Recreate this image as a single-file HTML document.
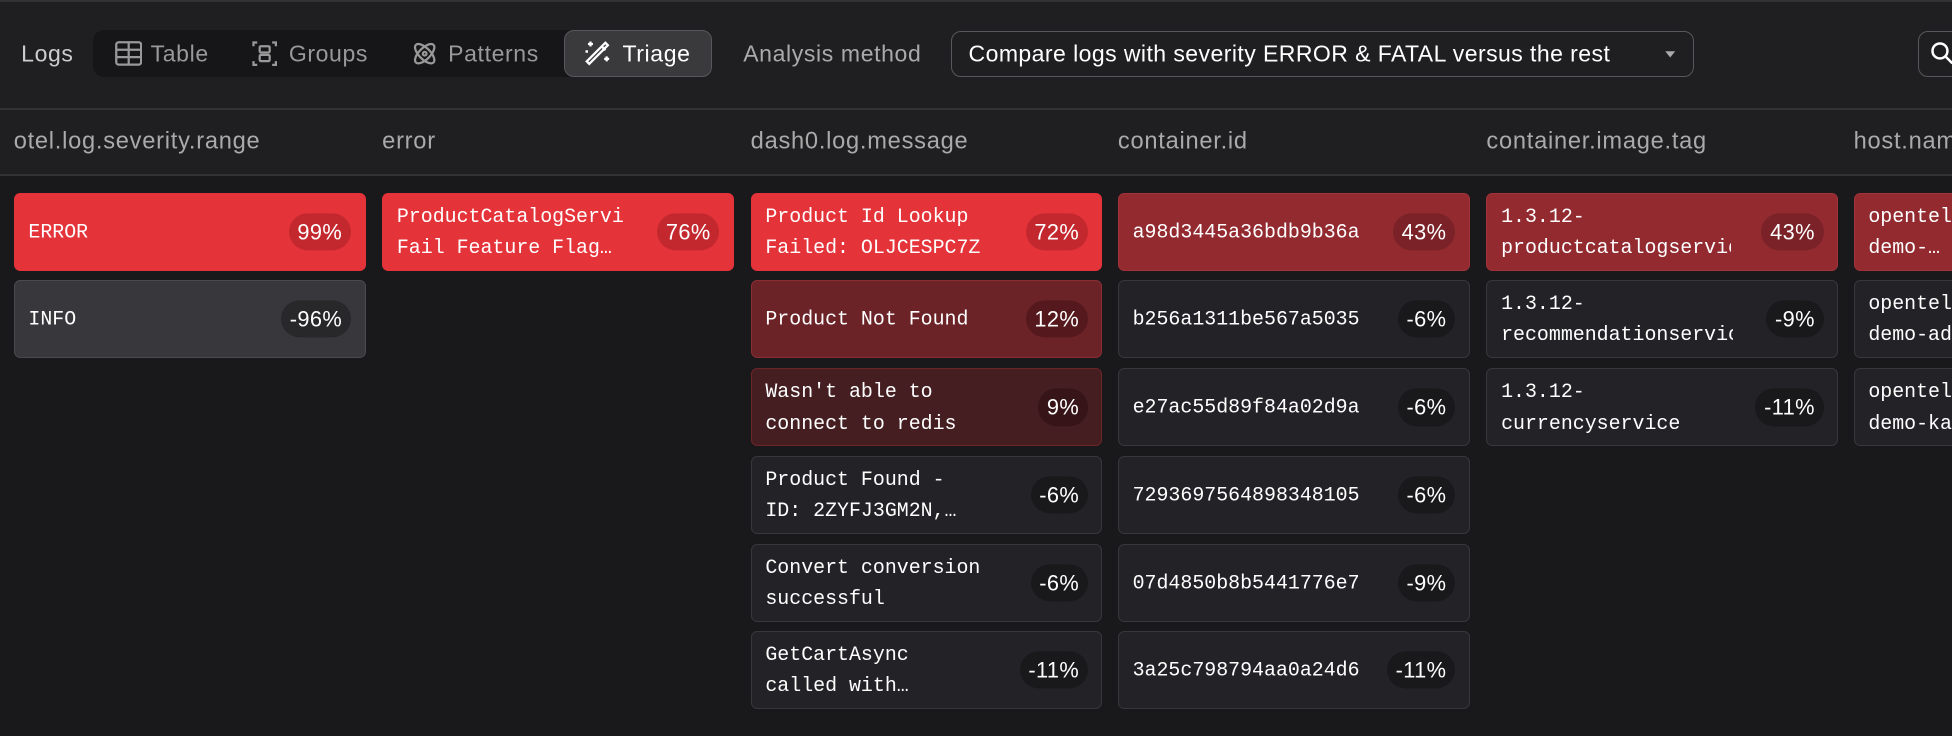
<!DOCTYPE html>
<html><head><meta charset="utf-8"><style>
html,body{margin:0;padding:0;background:#19191b;overflow:hidden;}
#root{zoom:1.2449;width:1568px;height:591px;position:relative;font-family:"Liberation Sans",sans-serif;color:#ddd;overflow:hidden;background:#19191b;}
.top{position:absolute;left:0;top:0;width:1568px;height:87px;background:#1f1f21;border-top:2px solid #333336;box-sizing:border-box;}
.hdr{position:absolute;left:0;top:87px;width:1568px;height:54px;background:#1f1f21;border-top:2px solid #333336;border-bottom:2px solid #333336;box-sizing:border-box;}
.t{position:absolute;font-size:18.5px;letter-spacing:0.5px;white-space:nowrap;top:43px;transform:translateY(-50%);}
.seg{position:absolute;left:75px;top:24px;width:497px;height:38px;background:#161618;border-radius:9px;}
.tri{position:absolute;left:453px;top:24px;width:117px;height:36px;background:#3a3a3d;border:1px solid #58585c;border-radius:8px;}
.sel{position:absolute;left:764px;top:25px;width:595px;height:35px;border:1px solid #58585c;border-radius:8px;}
.col{position:absolute;top:114px;font-size:19px;letter-spacing:0.6px;color:#aaa;transform:translateY(-50%);white-space:nowrap;}
.c{position:absolute;width:281px;height:61px;border:1px solid #38383c;background:#232327;border-radius:5px;overflow:hidden;}
.c .m{position:absolute;left:11px;top:50%;transform:translateY(-50%);font-family:"Liberation Mono",monospace;font-size:16px;line-height:25px;color:#fff;white-space:pre;overflow:hidden;}
.c .p{position:absolute;right:11px;top:50%;transform:translateY(-50%);height:30px;line-height:30px;padding:0 7px;border-radius:15px;background:#19191b;font-size:17.5px;letter-spacing:0.3px;color:#fff;}
.r1{background:#e5333a;border-color:#e5333a;} .r1 .p{background:#c4282f;}
.r2{background:#922a30;border-color:#a3323a;} .r2 .p{background:#7a2227;}
.r3{background:#6b2328;border-color:#8a2e33;} .r3 .p{background:#55191d;}
.r4{background:#451e22;border-color:#6e2529;} .r4 .p{background:#361417;}
.g{background:#38383c;border-color:#4a4a4e;} .g .p{background:#28282b;}
svg{position:absolute;}
</style></head><body><div id="root">
<div class="top"></div>
<div class="t" style="left:17px;color:#ccc">Logs</div>
<div class="seg"></div>
<div class="tri"></div>
<svg style="left:92px;top:33px" width="22" height="20" viewBox="0 0 22 20" fill="none" stroke="#999" stroke-width="1.8"><rect x="1" y="1" width="20" height="18" rx="2"/><path d="M1 7h20M1 13h20M11 1v18"/></svg>
<div class="t" style="left:121px;color:#999">Table</div>
<svg style="left:202px;top:32px" width="22" height="22" viewBox="0 0 22 22" fill="none" stroke="#999" stroke-width="1.8"><path d="M5 2H2v3M17 2h3v3M5 20H2v-3M17 20h3v-3"/><rect x="7" y="5" width="8" height="5" rx="1"/><rect x="7" y="12" width="8" height="5" rx="1"/></svg>
<div class="t" style="left:232px;color:#999">Groups</div>
<svg style="left:330px;top:32px" width="22" height="22" viewBox="0 0 22 22" fill="none" stroke="#999" stroke-width="1.8"><ellipse cx="11" cy="11" rx="10" ry="4.5" transform="rotate(45 11 11)"/><ellipse cx="11" cy="11" rx="10" ry="4.5" transform="rotate(-45 11 11)"/><circle cx="11" cy="11" r="1.5"/></svg>
<div class="t" style="left:360px;color:#999">Patterns</div>
<svg style="left:468px;top:31px" width="24" height="24" viewBox="0 0 24 24" fill="none" stroke="#fff" stroke-width="1.8"><path d="M20 5L5 20l-2-2L18 3z"/><path d="M15 6l3 3"/><path d="M6 2v4M4 4h4M19 14v4M17 16h4M3 9v2M2 10h2"/></svg>
<div class="t" style="left:500px;color:#fff">Triage</div>
<div class="t" style="left:597px;color:#aaa">Analysis method</div>
<div class="sel"></div>
<div class="t" style="left:778px;color:#fff;letter-spacing:0.35px">Compare logs with severity ERROR &amp; FATAL versus the rest</div>
<svg style="left:1337px;top:40px" width="10" height="7" viewBox="0 0 10 7"><path d="M1 1h8L5 6z" fill="#aaa"/></svg>
<div style="position:absolute;left:1541px;top:25px;width:40px;height:35px;border:1px solid #58585c;border-radius:8px;"></div>
<svg style="left:1550px;top:33px" width="20" height="20" viewBox="0 0 20 20" fill="none" stroke="#fff" stroke-width="2"><circle cx="8" cy="8" r="6"/><path d="M12.5 12.5L18 18"/></svg>
<div class="hdr"></div>
<div class="col" style="left:11px">otel.log.severity.range</div>
<div class="col" style="left:307px">error</div>
<div class="col" style="left:603px">dash0.log.message</div>
<div class="col" style="left:898px">container.id</div>
<div class="col" style="left:1194px">container.image.tag</div>
<div class="col" style="left:1489px">host.name</div>

<div class="c r1" style="left:11px;top:155px"><div class="m">ERROR</div><div class="p">99%</div></div>
<div class="c g" style="left:11px;top:225px"><div class="m">INFO</div><div class="p">-96%</div></div>

<div class="c r1" style="left:307px;top:155px"><div class="m" style="width:183px">ProductCatalogServi
Fail Feature Flag…</div><div class="p">76%</div></div>

<div class="c r1" style="left:603px;top:155px"><div class="m">Product Id Lookup
Failed: OLJCESPC7Z</div><div class="p">72%</div></div>
<div class="c r3" style="left:603px;top:225px"><div class="m">Product Not Found</div><div class="p">12%</div></div>
<div class="c r4" style="left:603px;top:296px"><div class="m">Wasn't able to
connect to redis</div><div class="p">9%</div></div>
<div class="c" style="left:603px;top:366px"><div class="m">Product Found -
ID: 2ZYFJ3GM2N,…</div><div class="p">-6%</div></div>
<div class="c" style="left:603px;top:437px"><div class="m">Convert conversion
successful</div><div class="p">-6%</div></div>
<div class="c" style="left:603px;top:507px"><div class="m">GetCartAsync
called with…</div><div class="p">-11%</div></div>

<div class="c r2" style="left:898px;top:155px"><div class="m" style="width:182px">a98d3445a36bdb9b36a</div><div class="p">43%</div></div>
<div class="c" style="left:898px;top:225px"><div class="m">b256a1311be567a5035</div><div class="p">-6%</div></div>
<div class="c" style="left:898px;top:296px"><div class="m">e27ac55d89f84a02d9a</div><div class="p">-6%</div></div>
<div class="c" style="left:898px;top:366px"><div class="m">7293697564898348105</div><div class="p">-6%</div></div>
<div class="c" style="left:898px;top:437px"><div class="m">07d4850b8b5441776e7</div><div class="p">-9%</div></div>
<div class="c" style="left:898px;top:507px"><div class="m" style="width:182px">3a25c798794aa0a24d6</div><div class="p">-11%</div></div>

<div class="c r2" style="left:1194px;top:155px"><div class="m" style="width:185px">1.3.12-
productcatalogservice</div><div class="p">43%</div></div>
<div class="c" style="left:1194px;top:225px"><div class="m" style="width:186px">1.3.12-
recommendationservice</div><div class="p">-9%</div></div>
<div class="c" style="left:1194px;top:296px"><div class="m">1.3.12-
currencyservice</div><div class="p">-11%</div></div>

<div class="c r2" style="left:1489px;top:155px"><div class="m">opentelemetry-
demo-…</div></div>
<div class="c" style="left:1489px;top:225px"><div class="m">opentelemetry-
demo-ad</div></div>
<div class="c" style="left:1489px;top:296px"><div class="m">opentelemetry-
demo-kafka</div></div>
</div></body></html>
